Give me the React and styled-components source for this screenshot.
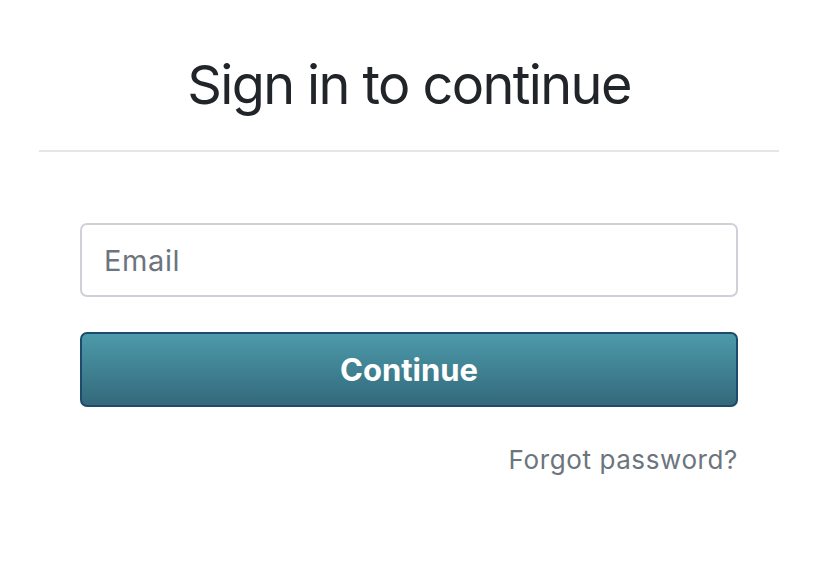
import React from 'react'
import styled, { createGlobalStyle } from 'styled-components'

const GlobalStyle = createGlobalStyle`
  body {
    margin: 0;
    background: #fff;
    font-family: Inter, "Noto Sans", sans-serif;
    color: #212529;
  }
`

const Page = styled.div`
  width: 740px;
  margin-left: 39px;
  padding-top: 50px;
`

const Heading = styled.h1`
  margin: 0;
  padding-bottom: 30px;
  font-size: 54px;
  font-weight: 400;
  letter-spacing: -1.6px;
  line-height: 70px;
  text-align: center;
  border-bottom: 2px solid #e6e6e6;
`

const Form = styled.form`
  display: flex;
  flex-direction: column;
  gap: 35px;
  margin: 71px 41px 0;
`

const Input = styled.input`
  box-sizing: border-box;
  height: 74px;
  padding: 0 22px;
  border: 2px solid #ced2d8;
  border-radius: 7px;
  font-family: inherit;
  font-size: 29px;
  letter-spacing: 0.6px;
  color: #495057;
  outline: none;

  &::placeholder {
    color: #6c757d;
  }
`

const Button = styled.button`
  box-sizing: border-box;
  height: 75px;
  border: 2px solid #1e4a6c;
  border-radius: 7px;
  background: linear-gradient(#4c9aab, #33697a);
  color: #fff;
  font-family: inherit;
  font-size: 31px;
  font-weight: 700;
  cursor: pointer;
`

const Links = styled.div`
  display: flex;
  justify-content: flex-end;
  margin: 37px 41px 0;
`

const Link = styled.a`
  font-size: 26px;
  letter-spacing: 0.6px;
  color: #6c757d;
  text-decoration: none;
`

export default function App() {
  return (
    <>
      <GlobalStyle />
      <Page>
        <Heading>Sign in to continue</Heading>
        <Form onSubmit={(e) => e.preventDefault()}>
          <Input type="email" placeholder="Email" />
          <Button type="submit">Continue</Button>
        </Form>
        <Links>
          <Link href="#">Forgot password?</Link>
        </Links>
      </Page>
    </>
  )
}
